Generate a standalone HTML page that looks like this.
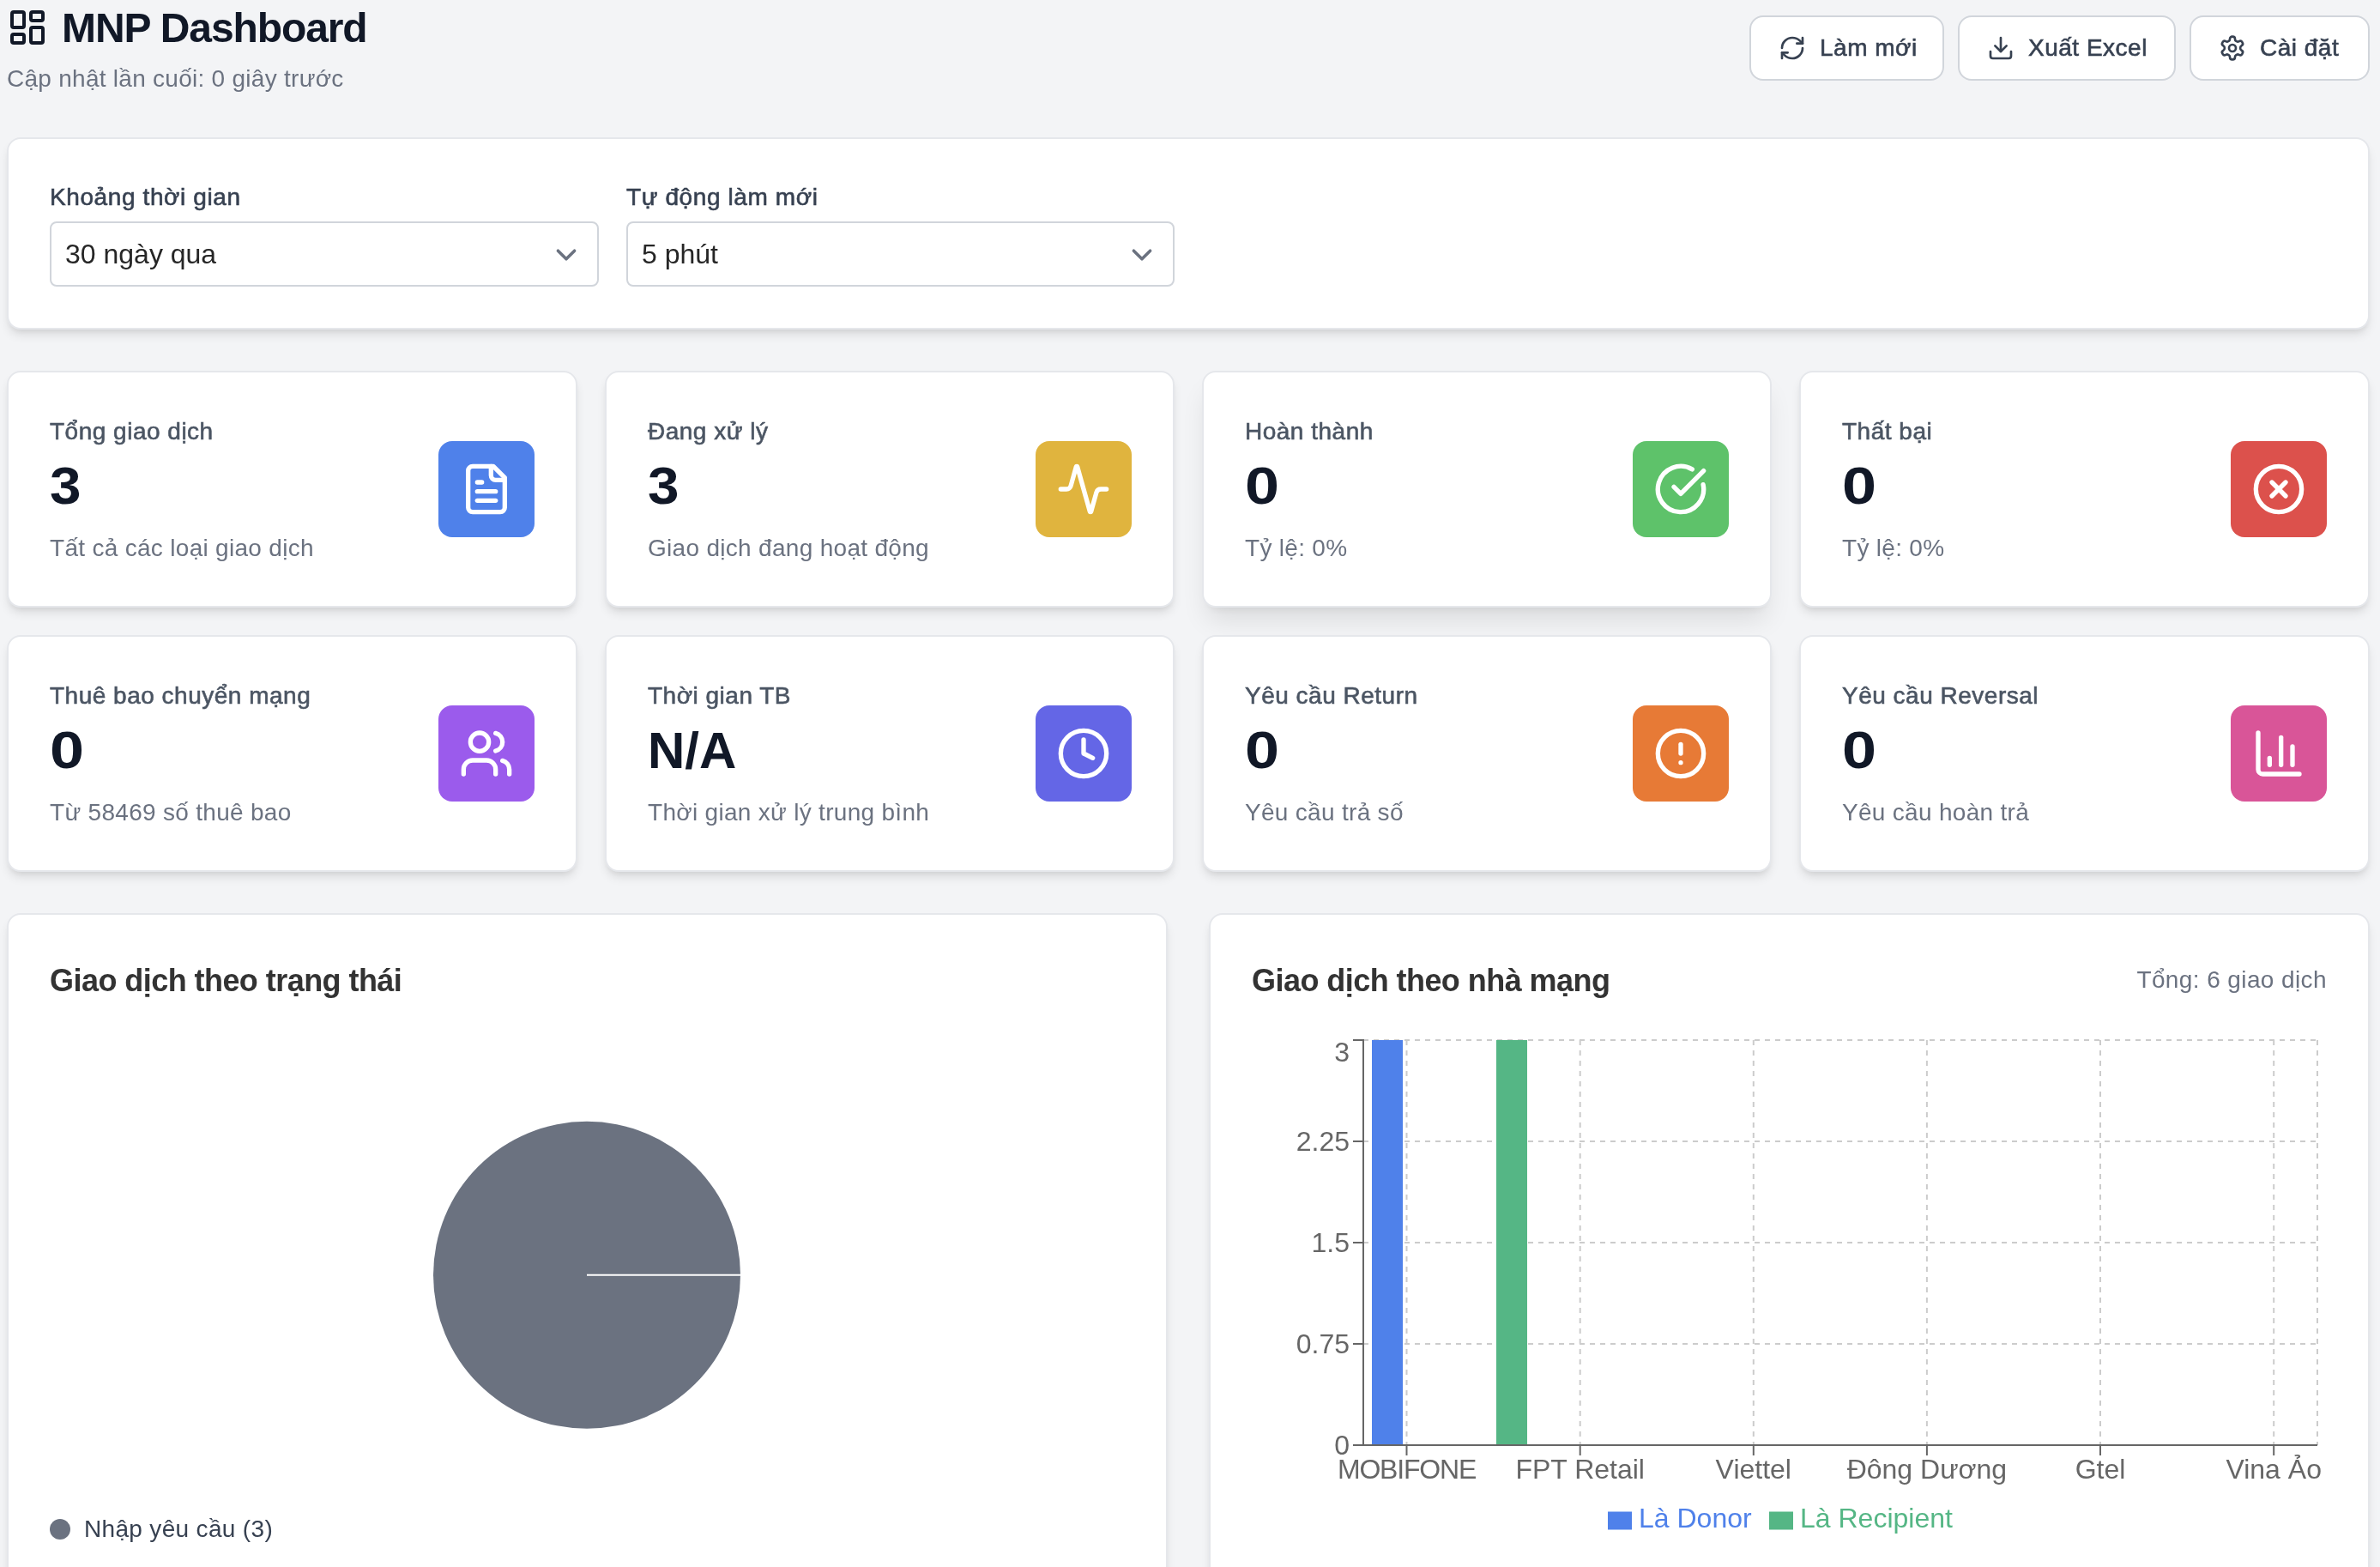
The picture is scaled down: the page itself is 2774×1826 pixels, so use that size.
<!DOCTYPE html>
<html><head><meta charset="utf-8">
<style>
*{box-sizing:border-box;margin:0;padding:0}
html,body{width:2774px;height:1826px;overflow:hidden;background:#f3f4f6;font-family:"Liberation Sans",sans-serif;}
.abs{position:absolute}
.t{position:absolute;white-space:nowrap}
.card{position:absolute;background:#fff;border:2px solid #e5e7eb;border-radius:16px;box-shadow:0 8px 12px -2px rgba(0,0,0,.1),0 4px 8px -4px rgba(0,0,0,.1)}
.card.hov{box-shadow:0 20px 30px -6px rgba(0,0,0,.1),0 8px 12px -8px rgba(0,0,0,.1)}
.btn{position:absolute;top:18px;height:76px;background:#fff;border:2px solid #d1d5db;border-radius:16px}
.btn svg{position:absolute;top:20px;left:32px;width:32px;height:32px}
.btn .t{top:16px;left:80px;font-size:28px;line-height:40px;color:#374151;letter-spacing:0.5px;-webkit-text-stroke:0.6px #374151}
.lbl{font-size:28px;line-height:40px;color:#374151;letter-spacing:0.6px;-webkit-text-stroke:0.6px #374151}
.sel{position:absolute;top:258px;height:76px;border:2px solid #d1d5db;border-radius:8px;background:#fff}
.sel .t{left:16px;top:16px;font-size:32px;line-height:40px;color:#262626}
.sel svg{position:absolute;top:13px;width:48px;height:48px}
.stat .l{left:48px;top:49px;font-size:28px;line-height:40px;color:#4b5563;letter-spacing:0.5px;-webkit-text-stroke:0.6px #4b5563}
.stat .n{left:48px;top:96px;font-size:62px;line-height:72px;color:#111827;font-weight:700}
.stat .s{left:48px;top:185px;font-size:28px;line-height:40px;color:#6b7280;letter-spacing:0.3px}
.stat .ib{position:absolute;right:48px;top:80px;width:112px;height:112px;border-radius:16px}
.stat .ib svg{position:absolute;left:24px;top:24px;width:64px;height:64px}
svg.ic{fill:none;stroke-linecap:round;stroke-linejoin:round}
.ctitle{font-size:36px;line-height:57px;color:#333;font-weight:700;letter-spacing:-0.55px}
</style></head><body><div style="position:absolute;left:0;top:0;width:2774px;height:1826px;will-change:transform">

<!-- header -->
<svg class="abs ic" style="left:8px;top:8px;width:48px;height:48px" viewBox="0 0 24 24" stroke="#111827" stroke-width="2"><rect width="7" height="9" x="3" y="3" rx="1"/><rect width="7" height="5" x="14" y="3" rx="1"/><rect width="7" height="9" x="14" y="12" rx="1"/><rect width="7" height="5" x="3" y="16" rx="1"/></svg>
<div class="t" style="left:72px;top:1px;font-size:48px;line-height:64px;font-weight:700;color:#111827;letter-spacing:-1.1px">MNP Dashboard</div>
<div class="t" style="left:8px;top:72px;font-size:28px;line-height:40px;color:#6b7280;letter-spacing:0.27px">Cập nhật lần cuối: 0 giây trước</div>

<div class="btn" style="left:2039px;width:227px">
<svg class="ic" viewBox="0 0 24 24" stroke="#374151" stroke-width="2"><path d="M3 12a9 9 0 0 1 9-9 9.75 9.75 0 0 1 6.74 2.74L21 8"/><path d="M21 3v5h-5"/><path d="M21 12a9 9 0 0 1-9 9 9.75 9.75 0 0 1-6.74-2.74L3 16"/><path d="M8 16H3v5"/></svg>
<div class="t">Làm mới</div></div>
<div class="btn" style="left:2282px;width:254px">
<svg class="ic" viewBox="0 0 24 24" stroke="#374151" stroke-width="2"><path d="M12 15V3"/><path d="M21 15v4a2 2 0 0 1-2 2H5a2 2 0 0 1-2-2v-4"/><path d="m7 10 5 5 5-5"/></svg>
<div class="t">Xuất Excel</div></div>
<div class="btn" style="left:2552px;width:210px">
<svg class="ic" viewBox="0 0 24 24" stroke="#374151" stroke-width="2"><path d="M12.22 2h-.44a2 2 0 0 0-2 2v.18a2 2 0 0 1-1 1.73l-.43.25a2 2 0 0 1-2 0l-.15-.08a2 2 0 0 0-2.73.73l-.22.38a2 2 0 0 0 .73 2.730l.15.1a2 2 0 0 1 1 1.72v.51a2 2 0 0 1-1 1.74l-.15.09a2 2 0 0 0-.73 2.73l.22.38a2 2 0 0 0 2.73.73l.15-.08a2 2 0 0 1 2 0l.43.25a2 2 0 0 1 1 1.73V20a2 2 0 0 0 2 2h.44a2 2 0 0 0 2-2v-.18a2 2 0 0 1 1-1.73l.43-.25a2 2 0 0 1 2 0l.15.08a2 2 0 0 0 2.73-.73l.22-.39a2 2 0 0 0-.73-2.73l-.15-.08a2 2 0 0 1-1-1.74v-.5a2 2 0 0 1 1-1.74l.15-.09a2 2 0 0 0 .73-2.73l-.22-.38a2 2 0 0 0-2.73-.73l-.15.08a2 2 0 0 1-2 0l-.43-.25a2 2 0 0 1-1-1.73V4a2 2 0 0 0-2-2z"/><circle cx="12" cy="12" r="3"/></svg>
<div class="t">Cài đặt</div></div>

<!-- filter card -->
<div class="card" style="left:8px;top:160px;width:2754px;height:224px"></div>
<div class="t lbl" style="left:58px;top:210px">Khoảng thời gian</div>
<div class="sel" style="left:58px;width:640px"><div class="t">30 ngày qua</div>
<svg class="ic" style="left:576px" viewBox="0 0 20 20" stroke="#6b7280" stroke-width="1.5"><path d="M6 8l4 4 4-4"/></svg></div>
<div class="t lbl" style="left:730px;top:210px">Tự động làm mới</div>
<div class="sel" style="left:730px;width:639px"><div class="t">5 phút</div>
<svg class="ic" style="left:575px" viewBox="0 0 20 20" stroke="#6b7280" stroke-width="1.5"><path d="M6 8l4 4 4-4"/></svg></div>

<!-- STATS -->
<div class="card stat" style="left:8px;top:432px;width:665px;height:276px"><div class="t l">Tổng giao dịch</div><div class="t n" style="transform:scaleX(1.06);transform-origin:0 0">3</div><div class="t s">Tất cả các loại giao dịch</div><div class="ib" style="background:#4f81ea"><svg class="ic" viewBox="0 0 24 24" stroke="#fff" stroke-width="2"><path d="M15 2H6a2 2 0 0 0-2 2v16a2 2 0 0 0 2 2h12a2 2 0 0 0 2-2V7Z"/><path d="M14 2v4a2 2 0 0 0 2 2h4"/><path d="M10 9H8"/><path d="M16 13H8"/><path d="M16 17H8"/></svg></div></div>
<div class="card stat" style="left:705px;top:432px;width:664px;height:276px"><div class="t l">Đang xử lý</div><div class="t n" style="transform:scaleX(1.06);transform-origin:0 0">3</div><div class="t s">Giao dịch đang hoạt động</div><div class="ib" style="background:#e0b43e"><svg class="ic" viewBox="0 0 24 24" stroke="#fff" stroke-width="2"><path d="M22 12h-2.48a2 2 0 0 0-1.930 1.46l-2.350 8.36a.25.25 0 0 1-.48 0L9.24 2.18a.25.25 0 0 0-.48 0l-2.35 8.36A2 2 0 0 1 4.49 12H2"/></svg></div></div>
<div class="card stat hov" style="left:1401px;top:432px;width:664px;height:276px"><div class="t l">Hoàn thành</div><div class="t n" style="transform:scaleX(1.16);transform-origin:0 0">0</div><div class="t s">Tỷ lệ: 0%</div><div class="ib" style="background:#5ec26a"><svg class="ic" viewBox="0 0 24 24" stroke="#fff" stroke-width="2"><path d="M21.801 10A10 10 0 1 1 17 3.335"/><path d="m9 11 3 3L22 4"/></svg></div></div>
<div class="card stat" style="left:2097px;top:432px;width:665px;height:276px"><div class="t l">Thất bại</div><div class="t n" style="transform:scaleX(1.16);transform-origin:0 0">0</div><div class="t s">Tỷ lệ: 0%</div><div class="ib" style="background:#dc514c"><svg class="ic" viewBox="0 0 24 24" stroke="#fff" stroke-width="2"><circle cx="12" cy="12" r="10"/><path d="m15 9-6 6"/><path d="m9 9 6 6"/></svg></div></div>
<div class="card stat" style="left:8px;top:740px;width:665px;height:276px"><div class="t l">Thuê bao chuyển mạng</div><div class="t n" style="transform:scaleX(1.16);transform-origin:0 0">0</div><div class="t s">Từ 58469 số thuê bao</div><div class="ib" style="background:#9b5bec"><svg class="ic" viewBox="0 0 24 24" stroke="#fff" stroke-width="2"><path d="M16 21v-2a4 4 0 0 0-4-4H6a4 4 0 0 0-4 4v2"/><circle cx="9" cy="7" r="4"/><path d="M22 21v-2a4 4 0 0 0-3-3.87"/><path d="M16 3.13a4 4 0 0 1 0 7.75"/></svg></div></div>
<div class="card stat" style="left:705px;top:740px;width:664px;height:276px"><div class="t l">Thời gian TB</div><div class="t n" style="font-size:60px;top:97px">N/A</div><div class="t s">Thời gian xử lý trung bình</div><div class="ib" style="background:#6466e6"><svg class="ic" viewBox="0 0 24 24" stroke="#fff" stroke-width="2"><circle cx="12" cy="12" r="10"/><path d="M12 6v6l4 2"/></svg></div></div>
<div class="card stat" style="left:1401px;top:740px;width:664px;height:276px"><div class="t l">Yêu cầu Return</div><div class="t n" style="transform:scaleX(1.16);transform-origin:0 0">0</div><div class="t s">Yêu cầu trả số</div><div class="ib" style="background:#e77a36"><svg class="ic" viewBox="0 0 24 24" stroke="#fff" stroke-width="2"><circle cx="12" cy="12" r="10"/><path d="M12 8v4"/><path d="M12 16h.01"/></svg></div></div>
<div class="card stat" style="left:2097px;top:740px;width:665px;height:276px"><div class="t l">Yêu cầu Reversal</div><div class="t n" style="transform:scaleX(1.16);transform-origin:0 0">0</div><div class="t s">Yêu cầu hoàn trả</div><div class="ib" style="background:#d95598"><svg class="ic" viewBox="0 0 24 24" stroke="#fff" stroke-width="2"><path d="M3 3v16a2 2 0 0 0 2 2h16"/><path d="M18 17V9"/><path d="M13 17V5"/><path d="M8 17v-3"/></svg></div></div>

<!-- CHARTS -->
<div class="card" style="left:8px;top:1064px;width:1353px;height:900px"></div>
<div class="t ctitle" style="left:58px;top:1114px">Giao dịch theo trạng thái</div>
<svg class="abs" style="left:0;top:0;width:2774px;height:1826px;overflow:visible" width="2774" height="1826">
<circle cx="684" cy="1485.8" r="179" fill="#6b7280"/>
<line x1="684" y1="1485.8" x2="864" y2="1485.8" stroke="#fff" stroke-width="2"/>
</svg>
<div class="abs" style="left:58px;top:1770px;width:24px;height:24px;border-radius:12px;background:#6b7280"></div>
<div class="t" style="left:98px;top:1762px;font-size:28px;line-height:40px;color:#374151;letter-spacing:0.33px">Nhập yêu cầu (3)</div>

<div class="card" style="left:1409px;top:1064px;width:1353px;height:900px"></div>
<div class="t ctitle" style="left:1459px;top:1114px">Giao dịch theo nhà mạng</div>
<div class="t" style="right:62px;top:1122px;font-size:28px;line-height:40px;color:#6b7280;letter-spacing:0.4px">Tổng: 6 giao dịch</div>
<svg class="abs" style="left:0;top:0;width:2774px;height:1826px" width="2774" height="1826" font-family="Liberation Sans" font-size="32">
<g stroke="#ccc" stroke-width="2" stroke-dasharray="6 6" fill="none">
<line x1="1589" y1="1212" x2="2701" y2="1212"/>
<line x1="1589" y1="1330" x2="2701" y2="1330"/>
<line x1="1589" y1="1448" x2="2701" y2="1448"/>
<line x1="1589" y1="1566" x2="2701" y2="1566"/>
<line x1="1639.5" y1="1212" x2="1639.5" y2="1684"/>
<line x1="1841.7" y1="1212" x2="1841.7" y2="1684"/>
<line x1="2043.8" y1="1212" x2="2043.8" y2="1684"/>
<line x1="2245.9" y1="1212" x2="2245.9" y2="1684"/>
<line x1="2448" y1="1212" x2="2448" y2="1684"/>
<line x1="2650.2" y1="1212" x2="2650.2" y2="1684"/>
<line x1="2701" y1="1212" x2="2701" y2="1684"/>
</g>
<rect x="1599" y="1212" width="36" height="472" fill="#4f81ea"/>
<rect x="1744" y="1212" width="36" height="472" fill="#55b685"/>
<g stroke="#666" stroke-width="2" fill="none">
<line x1="1589" y1="1211" x2="1589" y2="1685"/>
<line x1="1577" y1="1212" x2="1589" y2="1212"/>
<line x1="1577" y1="1330" x2="1589" y2="1330"/>
<line x1="1577" y1="1448" x2="1589" y2="1448"/>
<line x1="1577" y1="1566" x2="1589" y2="1566"/>
<line x1="1577" y1="1684" x2="2701" y2="1684"/>
<line x1="1639.5" y1="1684" x2="1639.5" y2="1696"/>
<line x1="1841.7" y1="1684" x2="1841.7" y2="1696"/>
<line x1="2043.8" y1="1684" x2="2043.8" y2="1696"/>
<line x1="2245.9" y1="1684" x2="2245.9" y2="1696"/>
<line x1="2448" y1="1684" x2="2448" y2="1696"/>
<line x1="2650.2" y1="1684" x2="2650.2" y2="1696"/>
</g>
<g fill="#666" text-anchor="end">
<text x="1573" y="1237">3</text>
<text x="1573" y="1341">2.25</text>
<text x="1573" y="1459">1.5</text>
<text x="1573" y="1577">0.75</text>
<text x="1573" y="1695">0</text>
</g>
<g fill="#666" text-anchor="middle">
<text x="1639.5" y="1723" letter-spacing="-1.2">MOBIFONE</text>
<text x="1841.7" y="1723">FPT Retail</text>
<text x="2043.8" y="1723">Viettel</text>
<text x="2245.9" y="1723">Đông Dương</text>
<text x="2448" y="1723">Gtel</text>
<text x="2650.2" y="1723">Vina Ảo</text>
</g>
<rect x="1874" y="1761.5" width="28" height="21" fill="#4f81ea"/>
<text x="1910" y="1780" fill="#4f81ea">Là Donor</text>
<rect x="2062" y="1761.5" width="28" height="21" fill="#55b685"/>
<text x="2098" y="1780" fill="#55b685">Là Recipient</text>
</svg>


</div></body></html>
